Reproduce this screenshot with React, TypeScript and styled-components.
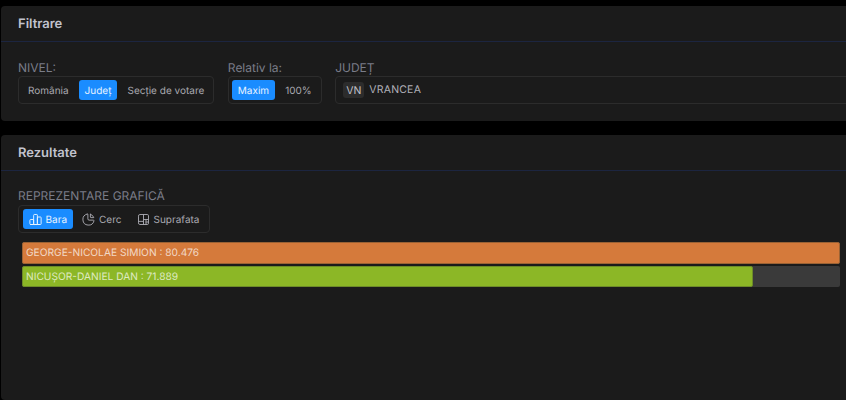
import styled, { createGlobalStyle } from "styled-components";
import { TbChartBar, TbChartPie, TbChartTreemap } from "react-icons/tb";

const GlobalStyle = createGlobalStyle`
  html, body {
    margin: 0;
    height: 100%;
    background: #000;
    overflow: hidden;
  }
  body {
    font-family: Inter, "Liberation Sans", sans-serif;
    text-rendering: geometricPrecision;
  }
`;

const Page = styled.div`
  width: 860px;
  height: 400px;
  padding: 6px 0 0 1px;
  box-sizing: border-box;
  display: flex;
  flex-direction: column;
  gap: 14px;
`;

const Card = styled.section<{ $grow?: boolean }>`
  background: #1b1b1b;
  border-radius: 4px;
  flex: ${(props) => (props.$grow ? "1" : "none")};
`;

const CardHeader = styled.header`
  height: 35px;
  padding-left: 17px;
  display: flex;
  align-items: center;
  border-bottom: 1px solid #1c2540;
  color: #c2c3ce;
  font-size: 13px;
  font-weight: 600;
`;

const FilterBody = styled.div`
  padding: 18px 0 0 17px;
  height: 79px;
  box-sizing: border-box;
  display: flex;
  gap: 13.5px;
`;

const Field = styled.div<{ $grow?: boolean }>`
  display: flex;
  flex-direction: column;
  flex: ${(props) => (props.$grow ? "1" : "none")};
`;

const Label = styled.label`
  color: #7a7d89;
  font-size: 12px;
  line-height: 16px;
`;

const GraphLabel = styled(Label)`
  margin-bottom: 1px;
`;

const Segmented = styled.div<{ $pad?: number; $gap?: number }>`
  display: flex;
  align-items: center;
  gap: ${(props) => props.$gap ?? 4}px;
  height: 28px;
  box-sizing: border-box;
  padding: 0 ${(props) => props.$pad ?? 3}px;
  border: 1px solid #2c2c2c;
  border-radius: 4px;
  align-self: flex-start;
`;

const Segment = styled.div<{ $active?: boolean }>`
  height: 20px;
  box-sizing: border-box;
  padding: 1px 6px 0;
  display: flex;
  align-items: center;
  gap: 4px;
  border-radius: 3px;
  font-size: 10px;
  background: ${(props) => (props.$active ? "#1a8cff" : "transparent")};
  color: ${(props) => (props.$active ? "#e8f3ff" : "#a9a9b0")};
  svg {
    width: 15px;
    height: 15px;
    margin: -1px -1px 0;
    stroke-width: 1.5;
  }
`;

const SelectBox = styled.div`
  height: 28px;
  box-sizing: border-box;
  padding-left: 7px;
  display: flex;
  align-items: center;
  gap: 5px;
  border: 1px solid #2c2c2c;
  border-radius: 4px;
`;

const CountyCode = styled.span`
  height: 16px;
  box-sizing: border-box;
  padding: 1px 3px 0;
  display: flex;
  align-items: center;
  background: #2c2c2c;
  border-radius: 3px;
  color: #c0c0c8;
  font-size: 10.5px;
`;

const CountyName = styled.span`
  color: #b0b0b8;
  font-size: 10.5px;
  margin-top: -2px;
  letter-spacing: 0.2px;
`;

const ResultBody = styled.div`
  padding: 17px 0 0 17px;
`;

const Bars = styled.div`
  width: 818px;
  margin: 9px 0 0 4px;
  display: flex;
  flex-direction: column;
  gap: 2px;
`;

const Track = styled.div`
  height: 21.5px;
  background: #3a3a3a;
  border-radius: 2px;
`;

const Fill = styled.div<{ $color: string; $edge: string }>`
  height: 100%;
  box-sizing: border-box;
  padding: 1px 0 0 3px;
  display: flex;
  align-items: center;
  background: ${(props) => props.$color};
  border: 1px solid ${(props) => props.$edge};
  border-radius: 2px;
  color: rgba(255, 255, 255, 0.72);
  font-size: 10.2px;
  white-space: nowrap;
`;

const results = [
  { name: "GEORGE-NICOLAE SIMION", votes: 80476, color: "#d57a3b", edge: "#9a6234" },
  { name: "NICUȘOR-DANIEL DAN", votes: 71889, color: "#8cb726", edge: "#6d8c28" },
];

const formatVotes = (votes: number) => votes.toLocaleString("de-DE");

export default function App() {
  const max = Math.max(...results.map((r) => r.votes));

  return (
    <Page>
      <GlobalStyle />
      <Card>
        <CardHeader>Filtrare</CardHeader>
        <FilterBody>
          <Field>
            <Label>NIVEL:</Label>
            <Segmented>
              <Segment>România</Segment>
              <Segment $active>Județ</Segment>
              <Segment>Secție de votare</Segment>
            </Segmented>
          </Field>
          <Field>
            <Label>Relativ la:</Label>
            <Segmented>
              <Segment $active>Maxim</Segment>
              <Segment>100%</Segment>
            </Segmented>
          </Field>
          <Field $grow>
            <Label>JUDEȚ</Label>
            <SelectBox>
              <CountyCode>VN</CountyCode>
              <CountyName>VRANCEA</CountyName>
            </SelectBox>
          </Field>
        </FilterBody>
      </Card>
      <Card $grow>
        <CardHeader>Rezultate</CardHeader>
        <ResultBody>
          <Field>
            <GraphLabel>REPREZENTARE GRAFICĂ</GraphLabel>
            <Segmented $pad={3.5} $gap={3}>
              <Segment $active><TbChartBar />Bara</Segment>
              <Segment><TbChartPie />Cerc</Segment>
              <Segment><TbChartTreemap />Suprafata</Segment>
            </Segmented>
          </Field>
          <Bars>
            {results.map((r) => (
              <Track key={r.name}>
                <Fill
                  $color={r.color}
                  $edge={r.edge}
                  style={{ width: `${(r.votes / max) * 100}%` }}
                >
                  {r.name} : {formatVotes(r.votes)}
                </Fill>
              </Track>
            ))}
          </Bars>
        </ResultBody>
      </Card>
    </Page>
  );
}
